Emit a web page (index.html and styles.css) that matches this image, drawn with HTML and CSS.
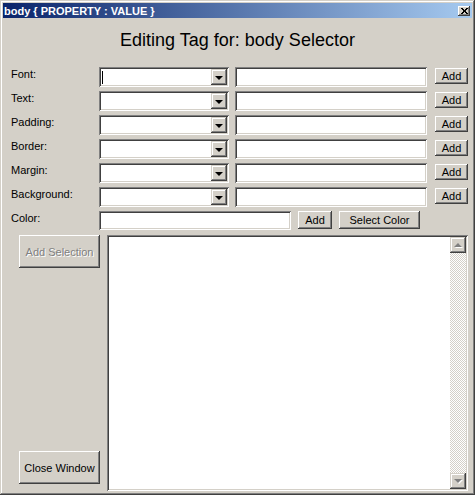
FILE: index.html
```html
<!DOCTYPE html>
<html lang="en">

<head>
  <meta charset="UTF-8">
  <title>body { PROPERTY : VALUE }</title>
  <link rel="stylesheet" href="styles.css">
</head>

<body>
  <div class="window">
    <div class="titlebar">
      <span class="caption">body { PROPERTY : VALUE }</span>
      <span class="close">
        <svg width="7" height="6" viewBox="0 0 7 6"><path d="M0 0h2v1h1v1h1v-1h1v-1h2v1h-1v1h-1v2h1v1h1v1h-2v-1h-1v-1h-1v1h-1v1h-2v-1h1v-1h1v-2h-1v-1h-1z" /></svg>
      </span>
    </div>
    <div class="content">
      <h1 class="heading">Editing Tag for: body Selector</h1>
      <div class="fields">
        <label class="field-label">Font:</label>
        <div class="combo"><span class="caret"></span><span class="combo-btn"></span></div>
        <input class="field-input" type="text">
        <button class="btn btn-add">Add</button>

        <label class="field-label">Text:</label>
        <div class="combo"><span></span><span class="combo-btn"></span></div>
        <input class="field-input" type="text">
        <button class="btn btn-add">Add</button>

        <label class="field-label">Padding:</label>
        <div class="combo"><span></span><span class="combo-btn"></span></div>
        <input class="field-input" type="text">
        <button class="btn btn-add">Add</button>

        <label class="field-label">Border:</label>
        <div class="combo"><span></span><span class="combo-btn"></span></div>
        <input class="field-input" type="text">
        <button class="btn btn-add">Add</button>

        <label class="field-label">Margin:</label>
        <div class="combo"><span></span><span class="combo-btn"></span></div>
        <input class="field-input" type="text">
        <button class="btn btn-add">Add</button>

        <label class="field-label">Background:</label>
        <div class="combo"><span></span><span class="combo-btn"></span></div>
        <input class="field-input" type="text">
        <button class="btn btn-add">Add</button>

        <label class="field-label">Color:</label>
        <div class="color-row">
          <input class="field-input color-input" type="text">
          <button class="btn btn-color-add">Add</button>
          <button class="btn btn-pick">Select Color</button>
        </div>
      </div>
      <div class="workspace">
        <div class="side">
          <button class="btn btn-side" disabled>Add Selection</button>
          <button class="btn btn-side">Close Window</button>
        </div>
        <div class="output">
          <div class="output-text"></div>
          <div class="scrollbar">
            <span class="scroll-btn scroll-up"></span>
            <span class="scroll-track"></span>
            <span class="scroll-btn scroll-down"></span>
          </div>
        </div>
      </div>
    </div>
  </div>
</body>

</html>
```

FILE: styles.css
```css
html {
  box-sizing: border-box;
  font-family: 'Liberation Sans', Arial, sans-serif;
  font-size: 11px;
}

*,
*:after,
*:before {
  box-sizing: inherit;
}

body {
  margin: 0;
}

button,
input {
  font: inherit;
  margin: 0;
}

.window {
  display: flex;
  flex-direction: column;
  width: 475px;
  height: 495px;
  padding: 3px;
  background-color: #d4d0c8;
  box-shadow: inset -1px -1px #404040, inset 1px 1px #d4d0c8, inset -2px -2px #808080, inset 2px 2px #fff;
}

.titlebar {
  display: flex;
  align-items: center;
  height: 15px;
  padding: 0 2px 0 1px;
  color: #fff;
  font-weight: bold;
  background: linear-gradient(to right, #0a246a, #a6caf0);
}

.close {
  display: flex;
  align-items: center;
  justify-content: center;
  width: 12px;
  height: 10px;
  margin-left: auto;
  background-color: #d4d0c8;
  box-shadow: inset -1px -1px #404040, inset 1px 1px #fff, inset -2px -2px #808080;
}

.content {
  display: flex;
  flex: 1;
  flex-direction: column;
}

.heading {
  margin: 11px 0 0;
  font-size: 18px;
  font-weight: normal;
  line-height: 22px;
  text-align: center;
}

.fields {
  display: grid;
  grid-template-columns: 88px 136px 200px 33px;
  grid-auto-rows: 20px;
  row-gap: 4px;
  margin-top: 16px;
  padding-left: 8px;
}

.field-label {
  padding-top: 1px;
}

.combo,
.field-input,
.output {
  background-color: #fff;
  box-shadow: inset 1px 1px #808080, inset -1px -1px #fff, inset 2px 2px #404040, inset -2px -2px #d4d0c8;
}

.combo {
  display: flex;
  justify-content: space-between;
  width: 130px;
  padding: 2px;
}

.caret {
  width: 1px;
  height: 13px;
  margin: 2px 0 0 1px;
  background-color: #000;
}

.combo-btn,
.scroll-btn {
  display: flex;
  align-items: center;
  justify-content: center;
  width: 16px;
  height: 16px;
  background-color: #d4d0c8;
  box-shadow: inset -1px -1px #404040, inset 1px 1px #d4d0c8, inset -2px -2px #808080, inset 2px 2px #fff;
}

.combo-btn:after {
  content: '';
  border-top: 4px solid #000;
  border-left: 4px solid transparent;
  border-right: 4px solid transparent;
  margin-top: 1px;
}

.field-input {
  width: 192px;
  height: 20px;
  padding: 0 3px;
  border: 0;
  outline: 0;
}

.btn {
  padding: 0;
  border: 0;
  color: #000;
  background-color: #d4d0c8;
  box-shadow: inset -1px -1px #404040, inset 1px 1px #fff, inset -2px -2px #808080, inset 2px 2px #d4d0c8;
}

.btn-add {
  width: 33px;
  height: 16px;
  margin-top: 1px;
}

.color-row {
  display: flex;
  grid-column: 2 / -1;
  gap: 7px;
}

.color-input {
  height: 19px;
}

.btn-color-add {
  width: 34px;
  height: 18px;
}

.btn-pick {
  width: 81px;
  height: 18px;
}

.workspace {
  display: flex;
  flex: 1;
  margin-top: 4px;
  padding: 0 4px 1px 16px;
}

.side {
  display: flex;
  flex-direction: column;
  justify-content: space-between;
  width: 81px;
  margin-right: 7px;
  padding-bottom: 7px;
}

.btn-side {
  height: 33px;
}

.btn-side:disabled {
  color: #808080;
  text-shadow: 1px 1px #fff;
}

.output {
  display: flex;
  flex: 1;
  padding: 2px;
}

.output-text {
  flex: 1;
}

.scrollbar {
  display: flex;
  flex-direction: column;
  width: 16px;
}

.scroll-track {
  flex: 1;
  background-image: conic-gradient(#d4d0c8 25%, #fff 0 50%, #d4d0c8 0 75%, #fff 0);
  background-size: 2px 2px;
}

.scroll-up:after,
.scroll-down:after {
  content: '';
  border-left: 4px solid transparent;
  border-right: 4px solid transparent;
  filter: drop-shadow(1px 1px #fff);
}

.scroll-up:after {
  border-bottom: 4px solid #808080;
}

.scroll-down:after {
  border-top: 4px solid #808080;
}
```
